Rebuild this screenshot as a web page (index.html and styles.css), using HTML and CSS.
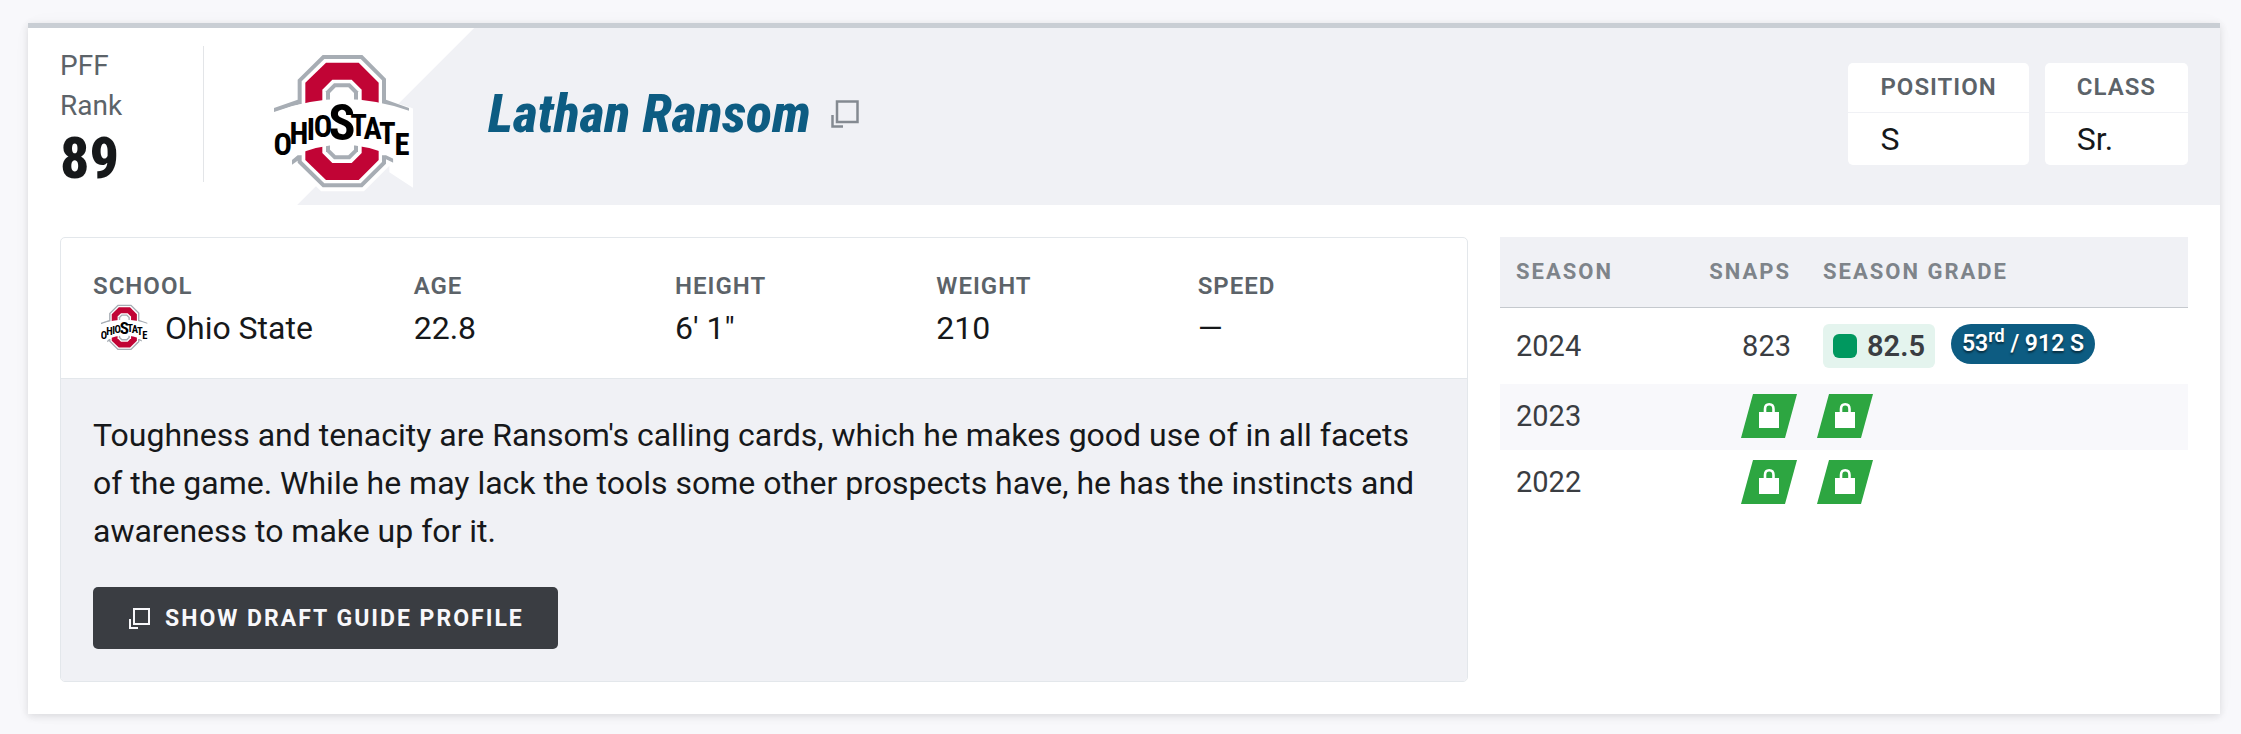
FILE: index.html
```html
<!DOCTYPE html>
<html lang="en">
<head>
  <meta charset="UTF-8" />
  <meta name="viewport" content="width=device-width, initial-scale=1.0" />
  <title>Lathan Ransom - Big Board</title>
  <link rel="stylesheet" href="styles.css">
</head>
<body>
  <!-- Shared icons -->
  <svg class="sprite" aria-hidden="true">
    <symbol id="logo-osu" viewBox="72 44 420 414">
      <g class="logo-halo">
        <path d="M218 47H337L408 118V373L337 444H218L143 370V121Z" />
        <path d="M72 216Q277 140 477 216V423L430 392V352Q277 280 126 350L110 390L85 408L72 402Z" />
      </g>
      <path fill="#a7adb4" d="M218 47H337L408 118V181L477 206V220Q277 140 72 220V206L143 181V121Z" />
      <path fill="#a7adb4" d="M126 362L143 348H408L430 358V370L408 360V373L337 444H218L143 370V364L126 376Z" />
      <path fill="#fff" d="M223 59H332L396 123V368L332 432H223L155 365V126Z" />
      <path fill="#c10435" d="M228 70H326L386 130V362L326 422H228L166 362V130Z" />
      <path fill="#fff" d="M247 121H305L335 151V341L305 371H247L217 341V151Z" />
      <path fill="#a7adb4" d="M252 132H300L324 156V336L300 360H252L228 336V156Z" />
      <path fill="#fff" d="M257 144H295L312 161V331L295 348H257L240 331V161Z" />
      <path fill="#fff" d="M72 218Q277 140 489 218V430L430 392V352Q277 280 126 352L110 395L72 410Z" />
      <text class="logo-text" font-size="92" x="98 147 183 219" y="346 314 302 292">OHIO</text>
      <text class="logo-text" font-size="150" x="276" y="302">S</text>
      <text class="logo-text" font-size="92" x="326 368 412 456" y="290 299 314 346">TATE</text>
    </symbol>
    <symbol id="icon-window" viewBox="0 0 28 28">
      <path fill="none" stroke="currentColor" stroke-width="2.5" d="M6 1.500H26.500V22H6ZM1.500 15V26.500H12" />
    </symbol>
    <symbol id="icon-lock" viewBox="0 0 56 44">
      <path fill="#2da641" d="M12 0H56L44 44H0Z" />
      <path fill="none" stroke="#fff" stroke-width="2.6" d="M24 19V15Q24 10.300 28.200 10.300Q32.500 10.300 32.500 15V19" />
      <path fill="#fff" d="M18 18H38V34H18Z" />
    </symbol>
  </svg>

  <div class="card">
    <div class="card-header">
      <div class="rank">
        <div class="rank-label">PFF<br>Rank</div>
        <div class="rank-value">89</div>
      </div>
      <div class="team">
        <svg class="team-logo" role="img" aria-label="Ohio State"><use href="#logo-osu" /></svg>
      </div>
      <a class="player" href="#">
        <span class="player-name">Lathan Ransom</span>
        <svg class="player-icon" aria-hidden="true"><use href="#icon-window" /></svg>
      </a>
      <dl class="badges">
        <div class="badge">
          <dt>Position</dt>
          <dd>S</dd>
        </div>
        <div class="badge">
          <dt>Class</dt>
          <dd>Sr.</dd>
        </div>
      </dl>
    </div>

    <div class="card-body">
      <div class="profile">
        <dl class="vitals">
          <div>
            <dt>School</dt>
            <dd>
              <svg class="school-logo" aria-hidden="true"><use href="#logo-osu" /></svg>
              Ohio State
            </dd>
          </div>
          <div>
            <dt>Age</dt>
            <dd>22.8</dd>
          </div>
          <div>
            <dt>Height</dt>
            <dd>6' 1"</dd>
          </div>
          <div>
            <dt>Weight</dt>
            <dd>210</dd>
          </div>
          <div>
            <dt>Speed</dt>
            <dd>—</dd>
          </div>
        </dl>
        <div class="summary">
          <p>Toughness and tenacity are Ransom's calling cards, which he makes good use of in all facets of the game. While he may lack the tools some other prospects have, he has the instincts and awareness to make up for it.</p>
          <button class="guide-button" type="button">
            <svg class="guide-icon" aria-hidden="true" viewBox="0 0 24 24"><path fill="none" stroke="currentColor" stroke-width="2" d="M7 3H22V18H7ZM3 13V22H11" /></svg>
            Show Draft Guide Profile
          </button>
        </div>
      </div>

      <div class="seasons">
        <table class="grades">
          <thead>
            <tr>
              <th class="col-season">Season</th>
              <th class="col-snaps">Snaps</th>
              <th>Season Grade</th>
            </tr>
          </thead>
          <tbody>
            <tr>
              <td>2024</td>
              <td class="col-snaps">823</td>
              <td>
                <div class="grade-cell">
                  <span class="grade">82.5</span>
                  <span class="grade-rank">53<sup>rd</sup> / 912 S</span>
                </div>
              </td>
            </tr>
            <tr class="locked">
              <td>2023</td>
              <td class="col-snaps"><a class="lock" href="#" aria-label="Unlock snaps"><svg><use href="#icon-lock" /></svg></a></td>
              <td><a class="lock" href="#" aria-label="Unlock grade"><svg><use href="#icon-lock" /></svg></a></td>
            </tr>
            <tr class="locked">
              <td>2022</td>
              <td class="col-snaps"><a class="lock" href="#" aria-label="Unlock snaps"><svg><use href="#icon-lock" /></svg></a></td>
              <td><a class="lock" href="#" aria-label="Unlock grade"><svg><use href="#icon-lock" /></svg></a></td>
            </tr>
          </tbody>
        </table>
      </div>
    </div>
  </div>
</body>
</html>
```
FILE: styles.css
```css
* {
  margin: 0;
  padding: 0;
  box-sizing: border-box;
}

body {
  font-family: Roboto, "Liberation Sans", sans-serif;
  font-size: 32px;
  line-height: 48px;
  background: #f8f8fb;
  color: #16181a;
  padding: 23px 21px 20px 28px;
}

svg {
  display: block;
}

.sprite {
  position: absolute;
  width: 0;
  height: 0;
}

.logo-halo {
  fill: #ffffff;
  stroke: #ffffff;
  stroke-width: 24px;
}

.logo-text {
  font-family: "Roboto Condensed", Roboto, sans-serif;
  font-weight: 700;
  line-height: 1;
  text-anchor: middle;
  fill: #000000;
}

.card {
  background: #ffffff;
  border-top: 5px solid #c9ced4;
  box-shadow: 0 2px 8px rgba(0, 0, 0, 0.12), 0 0 24px rgba(0, 0, 0, 0.02);
}

/* Header */
.card-header {
  display: flex;
  align-items: center;
  padding: 18px 32px 13px;
  background: linear-gradient(135deg, #ffffff 315px, #f0f1f5 316px);
}

.rank {
  align-self: flex-start;
  width: 144px;
  height: 136px;
  border-right: 1px solid #e3e5e8;
}

.rank-label {
  font-size: 28px;
  line-height: 40px;
  color: #5c6369;
}

.rank-value {
  font-family: "Roboto Condensed", Roboto, sans-serif;
  font-size: 58px;
  line-height: 64px;
  font-weight: 800;
}

.team {
  width: 280px;
  padding-top: 8px;
}

.team-logo {
  width: 140px;
  height: 138px;
  margin: 0 auto;
}

.player {
  display: flex;
  align-items: center;
  gap: 20px;
  flex: 1;
  margin-bottom: 10px;
  padding-left: 4px;
  color: #0d5c82;
  text-decoration: none;
}

.player-name {
  font-family: "Roboto Condensed", Roboto, sans-serif;
  font-size: 54px;
  line-height: 64px;
  font-style: italic;
  font-weight: 800;
}

.player-icon {
  width: 28px;
  height: 28px;
  color: #848a91;
}

.badges {
  display: flex;
  gap: 16px;
  margin-bottom: 10px;
}

.badge {
  background: #ffffff;
  border-radius: 5px;
}

.badge dt,
.vitals dt {
  font-size: 24px;
  font-weight: 600;
  letter-spacing: 1px;
  text-transform: uppercase;
  color: #5c6369;
}

.badge dt {
  line-height: 49px;
  padding: 0 32px;
  border-bottom: 1px solid #f0f1f5;
}

.badge dd {
  line-height: 52px;
  padding: 0 32px;
}

/* Body */
.card-body {
  display: grid;
  grid-template-columns: repeat(12, 1fr);
  gap: 32px;
  padding: 32px;
}

.profile {
  grid-column: span 8;
  border: 1px solid #e3e7eb;
  border-radius: 5px;
  overflow: hidden;
}

.vitals {
  display: grid;
  grid-template-columns: 5fr 4fr 4fr 4fr 4fr;
  gap: 24px;
  padding: 30px 32px 26px;
  border-bottom: 1px solid #e3e7eb;
}

.vitals dt {
  line-height: 36px;
}

.vitals dd {
  display: flex;
  align-items: center;
}

.school-logo {
  width: 48px;
  height: 48px;
  margin: 0 16px 0 8px;
}

.summary {
  padding: 32px;
  background: #f0f1f5;
}

.guide-button {
  display: flex;
  align-items: center;
  gap: 14px;
  height: 62px;
  margin-top: 32px;
  padding: 0 34px;
  border: none;
  border-radius: 5px;
  background: #3a3d42;
  color: #f8f8fb;
  font-family: inherit;
  font-size: 23px;
  font-weight: 700;
  letter-spacing: 2px;
  text-transform: uppercase;
  cursor: pointer;
}

.guide-icon {
  width: 24px;
  height: 24px;
}

/* Season grades */
.seasons {
  grid-column: span 4;
}

.grades {
  width: 100%;
  border-collapse: collapse;
  table-layout: fixed;
  font-size: 29px;
  line-height: 44px;
  color: #3a3d42;
}

.grades th {
  height: 70px;
  padding: 0 16px;
  background: #f0f1f5;
  border-bottom: 1px solid #c5c9ce;
  color: #7e848a;
  font-size: 22px;
  font-weight: 700;
  letter-spacing: 2px;
  text-align: left;
  text-transform: uppercase;
}

.grades td {
  padding: 16px;
}

.grades .locked td {
  padding: 10px 16px 12px;
}

.grades tbody tr:nth-child(even) {
  background: #f8f8fb;
}

.grades .col-season {
  width: 160px;
}

.grades th.col-snaps {
  width: 147px;
}

.grades .col-snaps {
  text-align: right;
}

.grade-cell {
  display: flex;
  align-items: flex-start;
  gap: 16px;
}

.grade {
  display: flex;
  align-items: center;
  gap: 10px;
  padding: 0 10px;
  border-radius: 6px;
  background: #e4f4ee;
  font-weight: 600;
}

.grade::before {
  content: "";
  width: 24px;
  height: 24px;
  border-radius: 6px;
  background: #00985f;
}

.grade-rank {
  padding: 0 11px;
  border-radius: 20px;
  background: #0d5c82;
  color: #ffffff;
  font-size: 23px;
  line-height: 40px;
  font-weight: 600;
  text-shadow: 0 2px 2px rgba(0, 0, 0, 0.5);
}

.grade-rank sup {
  font-size: 18px;
  line-height: 0;
}

.lock {
  display: inline-block;
  vertical-align: top;
  margin: 0 -6px;
}

.lock svg {
  width: 56px;
  height: 44px;
}

@media (max-width: 1200px) {
  .card-header {
    flex-wrap: wrap;
  }

  .profile,
  .seasons {
    grid-column: span 12;
  }

  .vitals {
    grid-template-columns: repeat(2, 1fr);
  }
}
```
